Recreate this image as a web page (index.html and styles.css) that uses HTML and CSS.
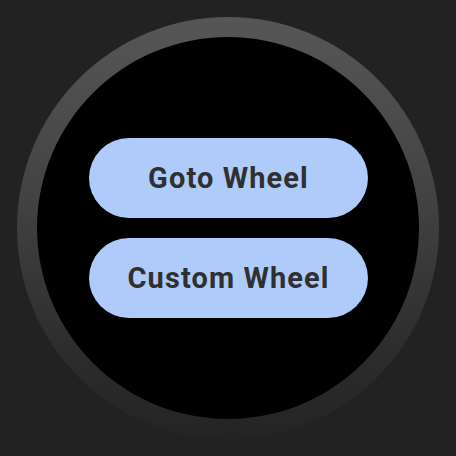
FILE: index.html
```html
<!DOCTYPE html>
<html>
<head>
<meta charset="utf-8">
<link rel="stylesheet" href="styles.css">
</head>
<body>
<div class="stage">
  <div class="bezel">
    <div class="screen">
      <button class="chip">Goto Wheel</button>
      <button class="chip">Custom Wheel</button>
    </div>
  </div>
</div>
</body>
</html>
```
FILE: styles.css
```css
html, body {
  margin: 0;
  padding: 0;
  background: #222222;
}
.stage {
  width: 456px;
  height: 456px;
  display: flex;
  align-items: center;
  justify-content: center;
}
.bezel {
  width: 422px;
  height: 422px;
  border-radius: 50%;
  background: linear-gradient(to bottom, #565656 0%, #444444 40%, #2c2c2c 80%, #242424 100%);
  display: flex;
  align-items: center;
  justify-content: center;
}
.screen {
  width: 382px;
  height: 382px;
  border-radius: 50%;
  background: #000000;
  display: flex;
  flex-direction: column;
  align-items: center;
  justify-content: center;
  gap: 20px;
}
.chip {
  width: 279px;
  height: 80px;
  border: none;
  border-radius: 40px;
  background: #aecbfa;
  color: #303030;
  font-family: Roboto, "Noto Sans", sans-serif;
  font-weight: 700;
  font-size: 29px;
  letter-spacing: 1.1px;
  padding: 0 0 0 1px;
  margin: 0;
  display: flex;
  align-items: center;
  justify-content: center;
}
```
